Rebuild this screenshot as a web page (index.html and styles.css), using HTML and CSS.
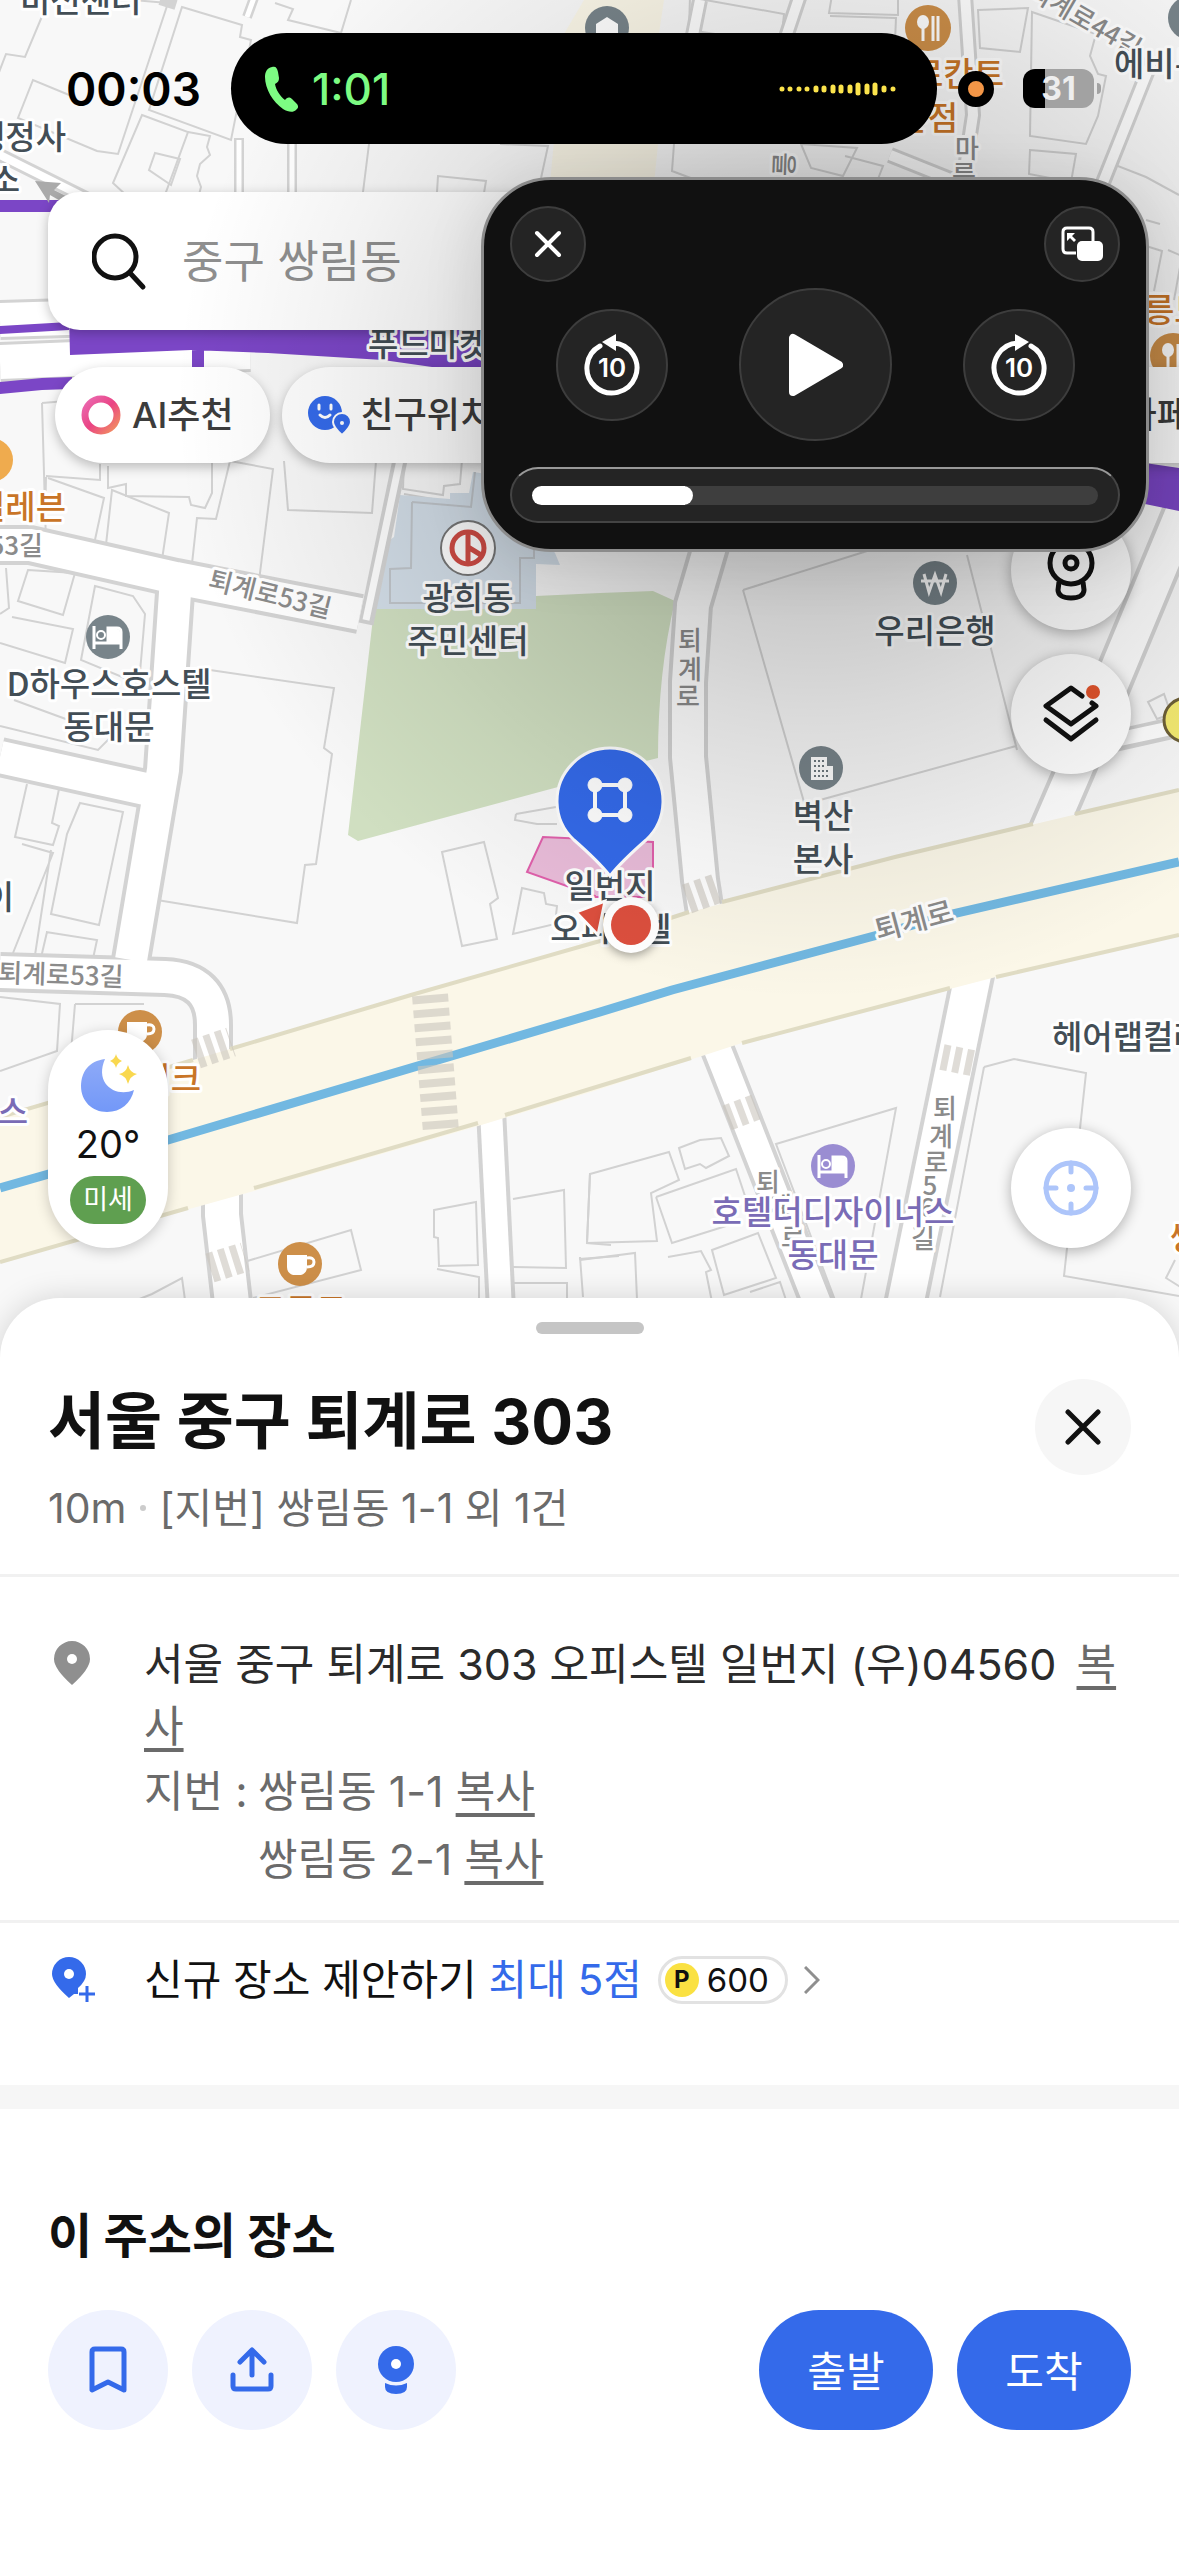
FILE: index.html
```html
<!DOCTYPE html>
<html lang="ko">
<head>
  <meta charset="UTF-8" />
  <meta name="viewport" content="width=device-width, initial-scale=1" />
  <title>서울 중구 퇴계로 303</title>
  <link rel="stylesheet" href="styles.css">
</head>
<body>

  <main class="map">
    <!-- Map canvas -->
    <svg class="map-canvas" viewBox="0 0 1179 1358" preserveAspectRatio="xMidYMax slice" aria-label="지도">
      <defs>
        <g id="bed">
          <path d="M-14 -11v23M-14 6h27M13 12v-17q0-4-4-4h-9v13h13" fill="none" stroke="#fff" stroke-width="3" />
          <path d="M0 -8h9q3 0 3 3v8h-12z" fill="#fff" />
          <circle cx="-7" cy="-2" r="4" fill="none" stroke="#fff" stroke-width="2" />
        </g>
        <g id="cup">
          <path d="M-13 -9h20v12q0 6-6 8h-8q-6-2-6-8z" fill="#fff" />
          <path d="M7 -6q7-1 7 4t-7 5" fill="none" stroke="#fff" stroke-width="3" />
        </g>
        <g id="fork">
          <ellipse cx="-5" cy="-6" rx="6" ry="7" fill="#fff" />
          <path d="M-5 0v13M5 -12v25M10 -12v25" stroke="#fff" stroke-width="3" />
        </g>
      </defs>

      <!-- Blocks -->
      <g class="building">
        <path d="M43 14 25 57 6 54-4 80M75-5 168 3M168 3 118 154 97 151 18 118 33 80 74 97M182 7l60 18-2 12 11 3-20 100-82-30zM142 115l46 17-33 90-42-39z" />
        <path d="M275 3l18 6-5 11 53 13 10-33M188 132l22 4-3 11 3 8-10 9-3 12 4 11-4 15M155 153l25 6-9 26-22-15z" />
        <path d="M296 144l-4 48M369 144l-6 48M437 192l1-16 48 5-2 12M500 144l48 2-10 46" />
        <path d="M690-4l-1 34 92 14 3-30-90-16M694 30l-13 70M832-5l-3 18 69 2V-4M830 16l66 2-3 70M978 10l50-2-8 44-40-4zM1032 12l64 22-6 22 8 18 8 2-8 40-12 28-56-8z" />
        <path d="M674 144l-2 27 40 15M801 144l10 24 32 8 14-28zM845 156l38 10-10 26M1030 150l46 4-5 28-42-8zM1144 95l-12 8-22 60 36 14 33 18" />
        <path d="M42 403l4 140M42 403l24-2M46 476l54 4V464M46 477l-1 46M108 466v22l18-4v12l63 1 2 8 14 3 7-15V460M230 461l43 8-16 128M284 461l4 49 84 3 4-52M230 461l-14 58-19-1-7 64 30 4" />
        <path d="M48 478l56 20-11 51-57-10M112 490l57 23-9 60-56-10zM28 570l47 3-12 42-45-14zM12 617l61 12-8 34-65-20M6 568l3 40-9 6M95 586l38 10 12 18-6 70-58-24z" />
        <path d="M14 700l98 36-14 14-98-24M210 670l124 18-10 60 8 6-16 110-11 1-8 58-140-23M27 784l-12 53 38 8 6-19-7-3 7-34M80 803l43 9-24 113-48-11 16-80zM22 844l31 9-40 100M51 850l-16 105M46 932l51 8-6 28M40 962l7-30" />
        <path d="M0 997l60 7-3 47-57 20M75 1004h69M75 1004l-5 60M442 852l42-10 14 56-8 6 7 35-35 7zM516 814l40-7M516 814l-1 6 22 4h20M522 888l22 5 2 11 11 2-2 18-42 10z" />
        <path d="M743 590l140-44M743 590l61 212M820 800l196-54-2-8M967 555l50 195M1148 702l16-8 7 20-14 5zM404 494l46 8M404 460l-1 29 40 6 1-9 16-2 2-24" />
        <path d="M244 1262l107-32 10 40-108 28M137 1300l15-6 30-16 3 22M434 1210l42-8 2 63-39 1-1-28-4-1zM437 1269l42 8v22M513 1199l51-9 2 78-53-1M505 1283h62v16M590 1173l-3 70 24 2M579 1259l40-3M580 1257l3 40" />
        <path d="M590 1174l79-22 10 28-28 13 6 48-70 2zM679 1148l21-8 21-2 8 18-23 12-6-4-15 5zM656 1197l80-28 12 36M656 1197l16 46 70-22M776 1144l120-36-37 202-18 6zM668 1257l33-6 10 19-5 2 6 30M712 1250l46-17 18 45-52 17zM580 1260l55-7 2 46" />
        <path d="M984 1067l30-8 72 14-22 203 115 20M984 1067l-44 230M1175 1260l-9 18 16 10M750 1292l30-10 6 18" />
        <path d="M1146 220l14 4M1146 246l16 5-8 40M1168 250l14 6-8 44" />
      </g>
      <path class="civic" d="M400 495l50 4v-6l19 0 4-21 14 2 68 79 5 12-24-1v45H375l12-67 7-5z" />
      <path class="civic-line" d="M412 502l59 5 4-35M412 502l-1 66-21 1v34h130v-45h14v-14" />
      <path class="park" d="M374 609h162v-13l64-3 53-2 22 10q-17 70-17 157l-40 10-60 19-200 54-10-6z" />
      <path class="place" d="M527 872l16-35 110 5v55h-58v-1z" />

      <!-- Small streets -->
      <g class="street-edge">
        <path d="M0 545h30l146 33 184 36" stroke-width="40" />
        <path d="M366 624L400 460" stroke-width="15" />
        <path d="M176 578l-13 192-32 190" stroke-width="40" />
        <path d="M0 757l150 33" stroke-width="40" />
        <path d="M0 972l165 5q48 2 48 48v45" stroke-width="40" />
        <path d="M712 540l-19 65-5 77v75l12 123 5 33" stroke-width="40" />
        <path d="M1190 495l-75 180-41 97-26 60" stroke-width="42" />
        <path d="M1110 742l80-18" stroke-width="22" />
        <path d="M222 1190v25l12 105" stroke-width="42" />
        <path d="M491 1110l10 200" stroke-width="30" />
        <path d="M712 1036l12 30 100 254" stroke-width="35" />
        <path d="M974 970l-72 350" stroke-width="44" />
        <path d="M0 320l200-6 300-4M0 362l250-10" stroke-width="40" />
        <path d="M-10 150l140 70" stroke-width="14" />
        <path d="M160 0l16 5M255-5l-8 22M239 138v60M292 144v50" stroke-width="10" />
        <path d="M800-5l-20 60M965-5l8 120-12 80M890 155l90 36M1152 60l-52 130M700 0l-12 60" stroke-width="16" />
      </g>
      <g class="street">
        <path d="M0 545h30l146 33 184 36" stroke-width="32" />
        <path d="M366 620L400 460" stroke-width="7" />
        <path d="M176 578l-13 192-32 190" stroke-width="32" />
        <path d="M0 757l150 33" stroke-width="32" />
        <path d="M0 972l165 5q48 2 48 48v60" stroke-width="32" />
        <path d="M712 540l-19 65-5 77v75l12 123 5 33" stroke-width="32" />
        <path d="M1190 495l-75 180-41 97-26 60" stroke-width="34" />
        <path d="M1106 742l84-18" stroke-width="14" />
        <path d="M222 1190v25l12 105" stroke-width="34" />
        <path d="M491 1110l10 200" stroke-width="22" />
        <path d="M712 1036l12 30 100 254" stroke-width="27" />
        <path d="M974 970l-72 350" stroke-width="36" />
        <path d="M0 320l200-6 300-4M0 362l250-10" stroke-width="34" />
        <path d="M-10 150l140 70" stroke-width="8" />
        <path d="M255-5l-8 22M239 140v60M292 144v50" stroke-width="5" />
        <path d="M800-5l-20 60M965-5l8 120-12 80M890 155l90 36M1152 60l-52 130M700 0l-12 60" stroke-width="10" />
      </g>

      <!-- Avenues -->
      <path class="avenue" d="M584 0l-20 34-15 160h104l5-50V40l6-40z" />
      <path class="avenue" d="M0 1117l193-57 218-65 261-78 223-60 284-67v145l-183 42-254 66-151 49-113 34-224 65-266 74z" />
      <path class="avenue-edge" d="M0 1117l193-57M230 1049l181-54 189-54 89-29M722 902l173-45 138-33M1075 814l104-24M0 1262l188-54M254 1188l224-65M505 1115l75-23 111-34M742 1043l208-55M996 977l183-42" />
      <path class="line-blue" d="M0 1188l168-48 432-128 72-22 202-54 78-22 227-52" />
      <path class="line-purple" d="M0 200h60v12H0zM0 326l69-4v8L0 334zM69 315h620v60l456 88 34 5v43l-34-7-662-136-51-1-49-7-115-7-77-3-121 5zM192 345h12v30h-12zM0 382l42-4 30-1v12l-30 1-42 4z" />

      <!-- Crosswalks -->
      <g class="crosswalk">
        <path d="M430 995l11 137" stroke-width="36" stroke-dasharray="8 6" />
        <path d="M196 1054l35-12M210 1268l35-11M687 899l34-12" stroke-width="30" stroke-dasharray="7 5" />
        <path d="M727 1118l29-11M942 1057l35 7" stroke-width="26" stroke-dasharray="7 5" />
      </g>
      <path class="arrow" d="M35 181l26 2-7 7 14 7-4 6-14-8-1 8z" />

      <!-- Street names -->
      <g class="street-name">
        <text x="207" y="588" transform="rotate(14 207 588)">퇴계로53길</text>
        <text x="43" y="555" text-anchor="end">53길</text>
        <text x="-2" y="982" transform="rotate(2 0 982)">퇴계로53길</text>
        <text x="1026" y="-4" transform="rotate(30 1026 -4)">퇴계로44길</text>
        <text x="690" y="650" text-anchor="middle">퇴<tspan x="690" dy="29">계</tspan><tspan x="688" dy="27">로</tspan></text>
        <text x="945" y="1118" text-anchor="middle">퇴<tspan x="941" dy="28">계</tspan><tspan x="936" dy="26">로</tspan><tspan x="930" dy="23">5</tspan><tspan x="927" dy="22">6</tspan><tspan x="923" dy="31">길</tspan></text>
        <text x="768" y="1192" text-anchor="middle">퇴<tspan x="780" dy="24">계</tspan><tspan x="793" dy="31">로</tspan></text>
        <text x="967" y="158" text-anchor="middle">마<tspan x="964" dy="26">른</tspan></text>
        <text x="775" y="152" transform="rotate(92 775 152)">을</text>
        <text class="street-name-lg" x="878" y="941" transform="rotate(-15 878 941)">퇴계로</text>
      </g>

      <!-- Places -->
      <g class="label">
        <text x="20" y="12">비전센터</text>
        <text x="66" y="149" text-anchor="end">행정사</text>
        <text x="20" y="192" text-anchor="end">소</text>
        <text x="1114" y="76">에비뉴</text>
        <text x="368" y="356">푸드마켓</text>
        <text x="109" y="696" text-anchor="middle">D하우스호스텔<tspan x="109" dy="43">동대문</tspan></text>
        <text x="468" y="610" text-anchor="middle">광희동<tspan x="468" dy="43">주민센터</tspan></text>
        <text x="935" y="643" text-anchor="middle">우리은행</text>
        <text x="823" y="828" text-anchor="middle">벽산<tspan x="823" dy="43">본사</tspan></text>
        <text x="610" y="898" text-anchor="middle">일번지<tspan x="611" dy="43">오피스텔</tspan></text>
        <text x="1052" y="1049">헤어랩컬러</text>
        <text x="14" y="909" text-anchor="end">이</text>
      </g>
      <g class="label food">
        <text x="1004" y="86" text-anchor="end">로칸트</text>
        <text x="958" y="130" text-anchor="end">본점</text>
        <text x="66" y="519" text-anchor="end">일레븐</text>
        <text x="201" y="1091" text-anchor="end">케이크</text>
        <text x="301" y="1322" text-anchor="middle">그로드</text>
        <text x="1144" y="322">릉도</text>
        <text x="1170" y="1250">쌍</text>
      </g>
      <g class="label hotel">
        <text x="833" y="1224" text-anchor="middle">호텔더디자이너스<tspan x="833" dy="43">동대문</tspan></text>
        <text x="28" y="1124" text-anchor="end">스</text>
      </g>

      <!-- Place icons -->
      <g class="poi">
        <circle cx="108" cy="637" r="22" /><use href="#bed" x="108" y="637" />
        <circle cx="607" cy="28" r="22" /><path class="poi-mark" d="M596 24l11-7 11 7v11h-22z" />
        <circle cx="1190" cy="18" r="22" />
        <circle cx="935" cy="583" r="22" />
        <path d="M924 574l5 18 6-17 6 17 5-18M921 581h28" fill="none" stroke="#fff" stroke-width="3" />
        <circle cx="821" cy="768" r="22" />
        <path class="poi-mark" d="M811 757h16v9h6v14h-22z" />
        <path d="M814 761h10M814 766h10M814 771h16M814 776h16" stroke="#6d787e" stroke-width="2" stroke-dasharray="2 2" />
      </g>
      <g class="poi food">
        <circle cx="928" cy="28" r="23" /><use href="#fork" x="928" y="28" />
        <circle cx="1173" cy="356" r="23" /><use href="#fork" x="1173" y="356" />
        <circle cx="140" cy="1032" r="22" /><use href="#cup" x="140" y="1031" />
        <circle cx="300" cy="1264" r="22" /><use href="#cup" x="300" y="1264" />
        <circle class="store" cx="-9" cy="460" r="22" />
      </g>
      <g class="poi hotel">
        <circle cx="833" cy="1166" r="22" /><use href="#bed" x="833" y="1166" />
      </g>
      <circle cx="468" cy="548" r="27" fill="#fff" stroke="#777" stroke-width="2" />
      <circle cx="468" cy="548" r="16" fill="none" stroke="#d04c45" stroke-width="5" />
      <path d="M468 532v32M468 547l13 8" stroke="#d04c45" stroke-width="5" fill="none" />
      <circle cx="1186" cy="720" r="22" fill="#f6ec72" stroke="#6e6038" stroke-width="3" />

      <!-- Selected pin and current location -->
      <path d="M610 876q-11-14-36-36a53 53 0 1 1 72 0q-25 22-36 36z" fill="#346aea" stroke="#fff" stroke-width="3" />
      <g fill="#fff" stroke="#fff">
        <path d="M595 785h30v30h-30z" fill="none" stroke-width="4" />
        <circle cx="595" cy="785" r="7" /><circle cx="625" cy="785" r="7" /><circle cx="595" cy="815" r="7" /><circle cx="625" cy="815" r="7" />
      </g>
      <path d="M576 912l29-11-7 34z" fill="#dc4f3e" stroke="#fff" stroke-width="3" />
      <circle class="me" cx="631" cy="925" r="28" />
      <circle cx="631" cy="925" r="20" fill="#dc4f3e" />
    </svg>

    <!-- Status bar -->
    <div class="status-bar">
      <span class="time">00:03</span>
      <div class="island">
        <svg width="36" height="48" viewBox="0 0 36 48"><path d="M8 2c4-1 5 1 6 5l1 6c0 3-1 4-4 6 1 6 5 12 10 16 3-3 4-3 7-1l5 5c2 3 1 4-1 6-3 3-8 2-13-1C9 37 1 24 1 12 1 7 3 3 8 2z" fill="#7dfc83" /></svg>
        <span class="call-time">1:01</span>
        <svg class="wave" width="118" height="16" viewBox="0 0 118 16">
          <path d="M3 8v.1M11 8v.1M20 8v.1M28 8v.1M37 7v2M45 7v2M54 6v4M62 6v4M71 6v4M79 4v8M88 5v6M96 4v8M105 7v2M114 8v.1" stroke="#fbe34c" stroke-width="5" stroke-linecap="round" />
        </svg>
      </div>
      <div class="indicators">
        <span class="rec-dot"></span>
        <span class="battery">31</span>
      </div>
    </div>

    <!-- Search -->
    <label class="search">
      <svg width="56" height="64" viewBox="0 0 56 64" fill="none" stroke="#111" stroke-width="5" stroke-linecap="round"><circle cx="23" cy="28" r="21" /><path d="M38 44l13 14" /></svg>
      <input type="text" placeholder="중구 쌍림동" aria-label="검색">
    </label>

    <nav class="chips">
      <button class="chip">
        <svg width="40" height="40" viewBox="0 0 40 40">
          <defs><linearGradient id="ai" x1="0" y1="0" x2="1" y2="1"><stop offset="0" stop-color="#ea6ab2" /><stop offset=".5" stop-color="#ea4484" /><stop offset="1" stop-color="#f2925e" /></linearGradient></defs>
          <circle cx="20" cy="20" r="16" fill="none" stroke="url(#ai)" stroke-width="7" />
        </svg>
        AI추천
      </button>
      <button class="chip">
        <svg width="42" height="40" viewBox="0 0 42 40">
          <circle cx="17" cy="18" r="17" fill="#346aea" />
          <path d="M11 10v4M23 10v4M12 20q5 5 10 0" fill="none" stroke="#fff" stroke-width="3" stroke-linecap="round" />
          <path d="M34 40q-9-8-9-13a9 9 0 0 1 18 0q0 5-9 13z" fill="#346aea" stroke="#fff" stroke-width="2" />
          <circle cx="34" cy="28" r="2" fill="#fff" />
        </svg>
        친구위치
      </button>
      <button class="chip"><span class="chip-dot"></span>음식점</button>
      <button class="chip"><span class="chip-dot"></span>EV 충전소</button>
      <button class="chip"><span class="chip-dot"></span>카페</button>
    </nav>

    <!-- Map controls -->
    <div class="controls">
      <button class="round" aria-label="거리뷰">
        <svg width="64" height="64" viewBox="0 0 64 64" fill="none" stroke="#111" stroke-width="5"><circle cx="32" cy="25" r="21" /><circle cx="32" cy="25" r="6" /><path d="M20 44l-1 8c0 5 5 8 13 8s13-3 13-8l-1-8" /></svg>
      </button>
      <button class="round" aria-label="지도 레이어">
        <svg width="64" height="64" viewBox="0 0 64 64" fill="none" stroke="#111" stroke-width="5" stroke-linejoin="round" stroke-linecap="round"><path d="M43 14L32 6 7 24l25 18 25-18-4-3M7 38l25 19 25-19" /><circle cx="54" cy="10" r="7" fill="#e2542c" stroke="none" /></svg>
      </button>
    </div>
    <button class="round locate" aria-label="현재 위치">
      <svg width="60" height="60" viewBox="0 0 60 60" fill="none" stroke="#adc5fa" stroke-width="5" stroke-linecap="round"><circle cx="30" cy="30" r="25" /><path d="M30 5v9M30 46v9M5 30h10M45 30h10" /><circle cx="30" cy="30" r="4" fill="#adc5fa" stroke="none" /></svg>
    </button>

    <div class="weather">
      <svg width="60" height="60" viewBox="0 0 60 60">
        <defs><linearGradient id="moon" x1="0" y1="0" x2="0" y2="1"><stop offset="0" stop-color="#8eaaf8" /><stop offset="1" stop-color="#7398f8" /></linearGradient></defs>
        <path d="M27 5C11 7 3 18 3 32c0 15 11 26 26 26 14 0 24-9 27-22-18 8-40-6-29-31z" fill="url(#moon)" />
        <path d="M38 0q1 5 6 7-5 2-6 7-1-5-6-7 5-2 6-7zM50 11q2 8 9 9-7 2-9 10-2-8-9-10 7-1 9-9z" fill="#f9d84f" />
      </svg>
      <span class="temp">20°</span>
      <span class="dust">미세</span>
    </div>

    <!-- Floating player -->
    <section class="player" aria-label="재생 컨트롤">
      <div class="player-top">
        <button class="glass sm" aria-label="닫기">
          <svg width="28" height="28" viewBox="0 0 28 28" stroke="#fff" stroke-width="4" stroke-linecap="round"><path d="M3 3l22 22M25 3L3 25" /></svg>
        </button>
        <button class="glass sm" aria-label="화면 속 화면">
          <svg width="42" height="36" viewBox="0 0 42 36"><path d="M15 27H6q-4 0-4-4V6q0-4 4-4h22q4 0 4 4v9" fill="none" stroke="#fff" stroke-width="3" /><path d="M6 7h8l-3 3 4 4-2 2-4-4-3 3z" fill="#fff" /><rect x="16" y="15" width="26" height="20" rx="5" fill="#fff" /></svg>
        </button>
      </div>
      <div class="player-main">
        <button class="glass md" aria-label="10초 뒤로">
          <svg width="60" height="64" viewBox="0 0 60 64"><path d="M18 13A25 25 0 1 0 31 10" fill="none" stroke="#fff" stroke-width="5" stroke-linecap="round" /><path d="M20 9L34 1v17z" fill="#fff" /><text x="30" y="44" text-anchor="middle">10</text></svg>
        </button>
        <button class="glass lg" aria-label="재생">
          <svg width="56" height="64" viewBox="0 0 56 64"><path d="M6 5v54l46-27z" fill="#fff" stroke="#fff" stroke-width="8" stroke-linejoin="round" /></svg>
        </button>
        <button class="glass md" aria-label="10초 앞으로">
          <svg width="60" height="64" viewBox="0 0 60 64"><path d="M42 13A25 25 0 1 1 29 10" fill="none" stroke="#fff" stroke-width="5" stroke-linecap="round" /><path d="M40 9L26 1v17z" fill="#fff" /><text x="30" y="44" text-anchor="middle">10</text></svg>
        </button>
      </div>
      <div class="seek">
        <input type="range" min="0" max="100" value="26" aria-label="재생 위치">
      </div>
    </section>
  </main>

  <!-- Bottom sheet -->
  <article class="sheet">
    <div class="handle"></div>

    <header class="sheet-head">
      <div>
        <h1>서울 중구 퇴계로 303</h1>
        <p class="summary">10m <i class="dot"></i> [지번] 쌍림동 1-1 외 1건</p>
      </div>
      <button class="close" aria-label="닫기">
        <svg width="36" height="36" viewBox="0 0 36 36" stroke="#111" stroke-width="5" stroke-linecap="round"><path d="M3 3l30 30M33 3L3 33" /></svg>
      </button>
    </header>

    <section class="row address">
      <svg class="row-icon" width="48" height="48" viewBox="0 0 48 48"><path d="M24 46Q6 30 6 20a18 18 0 0 1 36 0q0 10-18 26z" fill="#8f8f8f" /><circle cx="24" cy="20" r="5" fill="#fff" /></svg>
      <div>
        <p class="road">서울 중구 퇴계로 303 오피스텔 일번지 (우)04560 <a href="#copy">복사</a></p>
        <dl class="lot">
          <dt>지번 :</dt>
          <dd>쌍림동 1-1 <a href="#copy">복사</a></dd>
          <dd>쌍림동 2-1 <a href="#copy">복사</a></dd>
        </dl>
      </div>
    </section>

    <section class="row suggest">
      <svg class="row-icon" width="48" height="48" viewBox="0 0 48 48"><path d="M21 42Q4 27 4 18a17 17 0 0 1 34 0q0 7-8 14v6h-4z" fill="#346aea" /><circle cx="21" cy="18" r="5" fill="#fff" /><path d="M39 30v16M31 38h16" stroke="#346aea" stroke-width="3" /></svg>
      <a class="suggest-link" href="#suggest">
        <span>신규 장소 제안하기 <em>최대 5점</em></span>
        <span class="points"><b>P</b>600</span>
        <svg width="16" height="28" viewBox="0 0 16 28" fill="none" stroke="#8f8f8f" stroke-width="3"><path d="M1 1l13 13L1 27" /></svg>
      </a>
    </section>

    <section class="places">
      <h2>이 주소의 장소</h2>
      <div class="actions">
        <button class="tool" aria-label="저장">
          <svg width="48" height="48" viewBox="0 0 48 48" fill="none" stroke="#346aea" stroke-width="5" stroke-linejoin="round"><path d="M8 44V6q0-3 3-3h26q3 0 3 3v38L24 36z" /></svg>
        </button>
        <button class="tool" aria-label="공유">
          <svg width="48" height="48" viewBox="0 0 48 48" fill="none" stroke="#346aea" stroke-width="5" stroke-linecap="round" stroke-linejoin="round"><path d="M24 29V5M12 16L24 4l12 12M5 29v11q0 3 3 3h32q3 0 3-3V29" /></svg>
        </button>
        <button class="tool" aria-label="거리뷰">
          <svg width="48" height="52" viewBox="0 0 48 52"><circle cx="24" cy="20" r="18" fill="#346aea" /><circle cx="24" cy="20" r="5" fill="#fff" /><path d="M13 39q11 5 22 0v4q0 7-11 7t-11-7z" fill="#346aea" /></svg>
        </button>
        <button class="go first">출발</button>
        <button class="go">도착</button>
      </div>
    </section>
  </article>

</body>
</html>
```
FILE: styles.css
```css
:root {
  --blue: #346aea;
  --ink: #111;
  --gray: #6b6b6b;
  --line: #f1f1f1;
}

* {
  box-sizing: border-box;
}

body {
  margin: 0;
  min-height: 100vh;
  display: flex;
  flex-direction: column;
  font-family: Inter, "Noto Sans CJK KR", sans-serif;
  color: var(--ink);
  background: #fff;
  overflow-x: hidden;
}

button {
  border: none;
  padding: 0;
  font: inherit;
  color: inherit;
  cursor: pointer;
}

button svg {
  display: block;
}

h1, h2, p, dl, dd {
  margin: 0;
}

/* Map */
.map {
  position: relative;
  flex: 1;
  min-height: 1358px;
  background: #f8f8f8;
  overflow: hidden;
}

/* Wide shade under the floating player */
.map::after {
  content: "";
  position: absolute;
  inset: 0;
  z-index: 1;
  pointer-events: none;
  background: radial-gradient(640px 600px at calc(100% - 364px) 400px,
    rgba(0, 0, 0, 0.26) 0%,
    rgba(0, 0, 0, 0.2) 30%,
    rgba(0, 0, 0, 0.12) 52%,
    rgba(0, 0, 0, 0.05) 76%,
    rgba(0, 0, 0, 0) 100%);
}

.map-canvas {
  position: absolute;
  inset: 0;
  width: 100%;
  height: 100%;
  font-family: "Noto Sans CJK KR", sans-serif;
}

.building path {
  fill: none;
  stroke: #d2d2d2;
  stroke-width: 2;
}

.civic { fill: #d3dee8; }
.civic-line { fill: none; stroke: #c0c5ca; stroke-width: 2; }
.park { fill: #d0dfc1; }
.place { fill: #e9bcd9; stroke: #e060ab; stroke-width: 2; }

.street-edge path { fill: none; stroke: #d3d3d3; }
.street path { fill: none; stroke: #fff; }

.avenue { fill: #fbf7e8; }
.avenue-edge { fill: none; stroke: #e0dcc4; stroke-width: 4; }
.line-blue { fill: none; stroke: #72b8e1; stroke-width: 9; }
.line-purple { fill: #7b46c6; }

.crosswalk path { fill: none; stroke: #c9c5bd; stroke-opacity: 0.6; }
.arrow { fill: #aaa; }

.label text,
.street-name text {
  paint-order: stroke;
  stroke: #fff;
  stroke-width: 6px;
  stroke-linejoin: round;
}

.label {
  font-size: 33px;
  font-weight: 500;
  fill: #434e56;
}

.label.food { fill: #c97527; }
.label.hotel { fill: #7a6cb6; }

.street-name {
  font-size: 26px;
  font-weight: 500;
  fill: #8b8b8b;
}

.street-name-lg { font-size: 29px; }

.poi circle { fill: #78848a; }
.poi.food circle { fill: #cd8f49; }
.poi.food .store { fill: #efab4e; }
.poi.hotel circle { fill: #9a8dd2; }
.poi-mark { fill: #fff; }

.me {
  fill: #fff;
  filter: drop-shadow(0 3px 5px rgba(0, 0, 0, 0.35));
}

/* Status bar */
.status-bar {
  position: relative;
  z-index: 3;
  display: grid;
  grid-template-columns: 165px 1fr 242px;
  align-items: center;
  padding: 33px 0 0 66px;
}

.time {
  font-size: 46px;
  font-weight: 600;
  line-height: 56px;
  color: #000;
}

.island {
  display: flex;
  align-items: center;
  gap: 12px;
  height: 111px;
  padding: 0 40px 0 33px;
  border-radius: 56px;
  background: #000;
}

.call-time {
  font-size: 44px;
  font-weight: 500;
  color: #7dfc83;
}

.wave {
  margin-left: auto;
}

.indicators {
  display: flex;
  align-items: center;
  gap: 29px;
  padding-left: 21px;
}

.rec-dot {
  width: 36px;
  height: 36px;
  border: 10px solid #000;
  border-radius: 50%;
  background: #f39647;
}

.battery {
  position: relative;
  width: 71px;
  height: 39px;
  border-radius: 12px;
  background: linear-gradient(90deg, #000 31%, #a2a2a2 31%);
  color: #eee;
  font-size: 32px;
  font-weight: 700;
  line-height: 39px;
  text-align: center;
}

.battery::after {
  content: "";
  position: absolute;
  top: 14px;
  right: -7px;
  width: 4px;
  height: 11px;
  border-radius: 0 4px 4px 0;
  background: #a2a2a2;
}

/* Search */
.search {
  position: relative;
  display: flex;
  align-items: center;
  gap: 34px;
  height: 138px;
  margin: 48px 48px 0;
  padding: 0 44px;
  border-radius: 32px;
  background: #fff;
  box-shadow: 0 3px 12px rgba(0, 0, 0, 0.25);
}

.search input {
  flex: 1;
  min-width: 0;
  padding: 0;
  border: none;
  outline: none;
  background: none;
  font: 45px Inter, "Noto Sans CJK KR", sans-serif;
}

.search input::placeholder {
  color: #8f8f8f;
}

.chips {
  position: relative;
  display: flex;
  gap: 12px;
  margin-top: 21px;
  padding: 16px 55px 24px;
}

.chip {
  display: flex;
  flex: none;
  align-items: center;
  gap: 11px;
  height: 96px;
  padding: 0 36px 0 26px;
  border-radius: 48px;
  background: #fff;
  box-shadow: 0 4px 12px rgba(0, 0, 0, 0.25);
  color: #3c3c3c;
  font-size: 36px;
  font-weight: 500;
  line-height: 88px;
}

.chip-dot {
  width: 40px;
  height: 40px;
  border-radius: 50%;
  background: #e88b3a;
}

/* Map controls */
.controls {
  position: absolute;
  top: 510px;
  right: 48px;
  display: flex;
  flex-direction: column;
  gap: 24px;
}

.round {
  display: grid;
  place-items: center;
  width: 120px;
  height: 120px;
  border-radius: 50%;
  background: #fff;
  box-shadow: 0 3px 14px rgba(0, 0, 0, 0.3);
}

.locate {
  position: absolute;
  right: 48px;
  bottom: 110px;
}

.weather {
  position: absolute;
  left: 48px;
  bottom: 110px;
  display: flex;
  flex-direction: column;
  align-items: center;
  width: 120px;
  height: 218px;
  padding: 24px 0;
  border-radius: 60px;
  background: #fff;
  box-shadow: 0 3px 14px rgba(0, 0, 0, 0.2);
}

.temp {
  margin-bottom: 2px;
  font-size: 38px;
  line-height: 60px;
}

.dust {
  width: 76px;
  border-radius: 24px;
  background: #5f9f50;
  color: #fff;
  font-size: 27px;
  line-height: 48px;
  text-align: center;
}

/* Floating player */
.player {
  position: absolute;
  top: 177px;
  right: 30px;
  z-index: 2;
  width: 668px;
  padding: 26px;
  border: 3px solid #8b8b8b;
  border-radius: 70px;
  background: #111;
  box-shadow: 0 10px 60px rgba(0, 0, 0, 0.12);
}

.player-top {
  display: flex;
  justify-content: space-between;
}

.player-main {
  display: flex;
  justify-content: center;
  align-items: center;
  gap: 71px;
  margin: 6px 0 26px;
}

.glass {
  display: grid;
  place-items: center;
  border: 2px solid #3d3d3d;
  border-radius: 50%;
  background: #242424;
}

.glass text {
  fill: #fff;
  font-size: 26px;
  font-weight: 600;
}

.glass.sm { width: 76px; height: 76px; }
.glass.md { width: 112px; height: 112px; }
.glass.lg { width: 153px; height: 153px; }

.seek {
  display: flex;
  align-items: center;
  height: 56px;
  padding: 0 20px;
  border: 2px solid #444;
  border-top-color: #999;
  border-radius: 28px;
  background: #242424;
}

.seek input {
  appearance: none;
  width: 100%;
  height: 19px;
  margin: 0;
  border-radius: 10px;
  background: linear-gradient(90deg, #fff 27%, #3e3e3e 27%);
}

.seek input::-webkit-slider-thumb {
  appearance: none;
  width: 19px;
  height: 19px;
  border-radius: 50%;
  background: #fff;
}

/* Bottom sheet */
.sheet {
  position: relative;
  z-index: 3;
  margin-top: -60px;
  padding-top: 24px;
  border-radius: 60px 60px 0 0;
  background: #fff;
  box-shadow: 0 0 30px rgba(0, 0, 0, 0.15);
}

.handle {
  width: 108px;
  height: 12px;
  margin: 0 auto;
  border-radius: 6px;
  background: #c5c5c5;
}

.sheet-head {
  display: flex;
  justify-content: space-between;
  align-items: flex-start;
  padding: 45px 48px 42px;
  border-bottom: 3px solid var(--line);
}

.sheet h1 {
  font-size: 62px;
  font-weight: 700;
  line-height: 85px;
}

.summary {
  margin-top: 20px;
  color: var(--gray);
  font-size: 41px;
  line-height: 48px;
}

.dot {
  display: inline-block;
  width: 6px;
  height: 6px;
  margin: 0 2px 12px;
  border-radius: 50%;
  background: #ccc;
}

.close {
  display: grid;
  place-items: center;
  width: 96px;
  height: 96px;
  border-radius: 50%;
  background: #f6f6f6;
}

.row {
  display: flex;
  gap: 48px;
  padding: 56px 48px 27px;
  font-size: 43px;
}

.row-icon {
  flex: none;
  margin-top: 6px;
}

.road {
  color: #2b2b2b;
  line-height: 62px;
}

.row.address a {
  color: var(--gray);
  text-underline-offset: 6px;
}

.road a {
  margin-left: 8px;
}

.lot {
  display: grid;
  grid-template-columns: 114px 1fr;
  color: var(--gray);
  line-height: 68px;
}

.lot dd {
  grid-column: 2;
}

.suggest {
  padding: 27px 48px 75px;
  border-top: 3px solid var(--line);
}

.suggest-link {
  display: flex;
  align-items: center;
  gap: 16px;
  color: var(--ink);
  font-size: 42px;
  line-height: 60px;
  text-decoration: none;
}

.suggest-link em {
  color: var(--blue);
  font-style: normal;
}

.points {
  display: flex;
  align-items: center;
  gap: 8px;
  height: 48px;
  padding: 0 16px 0 4px;
  border: 3px solid #e2e2e2;
  border-radius: 24px;
  font-size: 33px;
}

.points b {
  width: 34px;
  height: 34px;
  border-radius: 50%;
  background: #fae142;
  font-size: 24px;
  line-height: 34px;
  text-align: center;
}

.places {
  padding: 95px 48px 126px;
  border-top: 24px solid #f6f6f6;
}

.places h2 {
  margin-bottom: 42px;
  font-size: 48px;
  font-weight: 700;
  line-height: 64px;
}

.actions {
  display: flex;
  gap: 24px;
}

.tool {
  display: grid;
  place-items: center;
  width: 120px;
  height: 120px;
  border-radius: 50%;
  background: #eff2fe;
}

.go {
  width: 174px;
  height: 120px;
  padding-bottom: 4px;
  border-radius: 60px;
  background: var(--blue);
  color: #fff;
  font-size: 42px;
}

.go.first {
  margin-left: auto;
}
```
